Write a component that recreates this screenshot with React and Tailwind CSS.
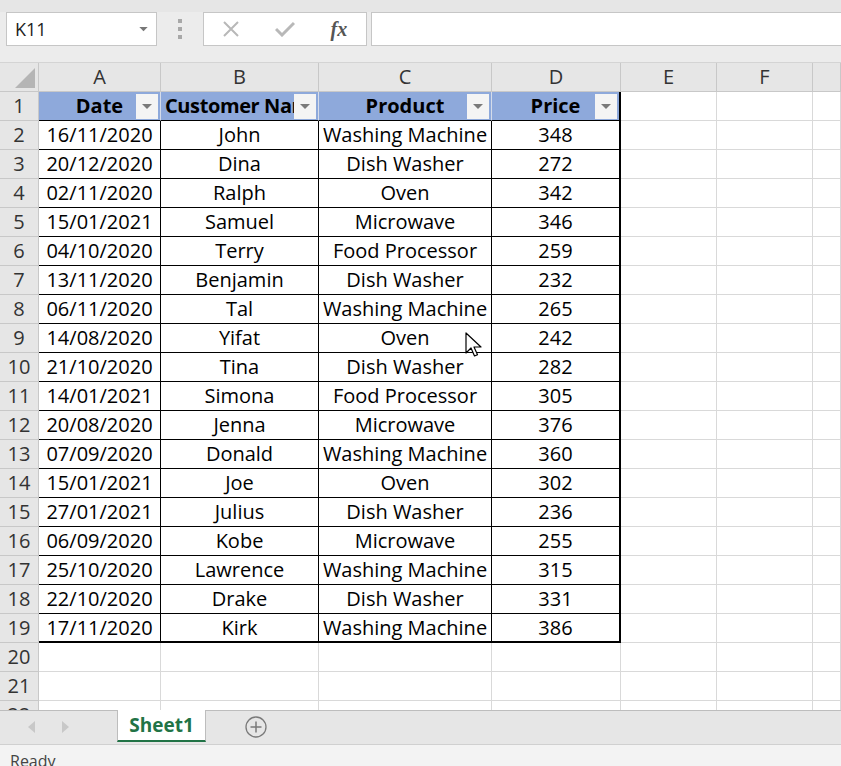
import React from "react";

const rows = [
  ["16/11/2020", "John", "Washing Machine", "348"],
  ["20/12/2020", "Dina", "Dish Washer", "272"],
  ["02/11/2020", "Ralph", "Oven", "342"],
  ["15/01/2021", "Samuel", "Microwave", "346"],
  ["04/10/2020", "Terry", "Food Processor", "259"],
  ["13/11/2020", "Benjamin", "Dish Washer", "232"],
  ["06/11/2020", "Tal", "Washing Machine", "265"],
  ["14/08/2020", "Yifat", "Oven", "242"],
  ["21/10/2020", "Tina", "Dish Washer", "282"],
  ["14/01/2021", "Simona", "Food Processor", "305"],
  ["20/08/2020", "Jenna", "Microwave", "376"],
  ["07/09/2020", "Donald", "Washing Machine", "360"],
  ["15/01/2021", "Joe", "Oven", "302"],
  ["27/01/2021", "Julius", "Dish Washer", "236"],
  ["06/09/2020", "Kobe", "Microwave", "255"],
  ["25/10/2020", "Lawrence", "Washing Machine", "315"],
  ["22/10/2020", "Drake", "Dish Washer", "331"],
  ["17/11/2020", "Kirk", "Washing Machine", "386"],
];

const gridCols = "grid grid-cols-[39px_122px_158px_173px_129px_96px_96px_1fr]";

const FilterButton = () => (
  <div className="absolute right-[2px] top-[2px] w-[22px] h-[25px] bg-[#f4f4f4] flex items-center justify-center">
    <svg width="10" height="6" viewBox="0 0 10 6">
      <path d="M0 0 L10 0 L5 5 Z" fill="#7a7a7a" />
    </svg>
  </div>
);

const RowNum = ({ n }) => (
  <div className="h-[29px] flex items-center justify-center bg-[#e6e6e6] border-r border-b border-[#c8c8c8] text-[20px] text-[#333]">
    {n}
  </div>
);

const Empty = () => <div className="h-[29px] border-r border-b border-[#d9d9d9] bg-white" />;

export default function App() {
  return (
    <div
      className="w-[841px] h-[766px] flex flex-col overflow-hidden bg-[#f3f3f3] select-none"
      style={{ fontFamily: '"Open Sans", sans-serif' }}
    >
      {/* formula bar */}
      <div className="h-[63px] bg-[#ececec] border-b border-[#d4d4d4] relative">
        <div className="absolute left-0 right-0 top-0 h-[12px] bg-[#e6e6e6]" />
        <div className="relative flex items-start pt-[12px]">
          <div className="ml-[6px] w-[151px] h-[34px] bg-white border border-[#c6c6c6] flex items-center justify-between pl-[8px] pr-[8px]">
            <span className="text-[18px] text-[#222]">K11</span>
            <svg width="9" height="5" viewBox="0 0 10 6">
              <path d="M0 0 L10 0 L5 5 Z" fill="#777" />
            </svg>
          </div>
          <div className="w-[46px] h-[34px] flex flex-col items-center justify-center gap-[4px]">
            <span className="w-[4px] h-[4px] bg-[#a8a8a8]" />
            <span className="w-[4px] h-[4px] bg-[#a8a8a8]" />
            <span className="w-[4px] h-[4px] bg-[#a8a8a8]" />
          </div>
          <div className="w-[164px] h-[34px] bg-white border border-[#c6c6c6] flex items-center">
            <div className="w-[55px] flex justify-center">
              <svg width="18" height="18" viewBox="0 0 18 18">
                <path d="M2 2 L16 16 M16 2 L2 16" stroke="#b8b8b8" strokeWidth="2" />
              </svg>
            </div>
            <div className="w-[54px] flex justify-center">
              <svg width="20" height="16" viewBox="0 0 20 16">
                <path d="M1 8 L7 14 L19 2" stroke="#b8b8b8" strokeWidth="3" fill="none" />
              </svg>
            </div>
            <div
              className="w-[55px] flex justify-center text-[20px] italic font-bold text-[#555]"
              style={{ fontFamily: '"Liberation Serif", serif' }}
            >
              fx
            </div>
          </div>
          <div className="ml-[4px] flex-1 h-[34px] bg-white border border-[#c6c6c6] border-r-0" />
        </div>
      </div>

      {/* sheet grid */}
      <div className="relative h-[647px] overflow-hidden bg-white">
        {/* column headers */}
        <div className={`${gridCols} h-[29px] bg-[#e6e6e6]`}>
          <div className="h-[29px] border-r border-b border-[#c8c8c8] relative overflow-hidden">
            <svg className="absolute right-[3px] bottom-[3px]" width="20" height="20" viewBox="0 0 20 20">
              <path d="M20 0 L20 20 L0 20 Z" fill="#b5b5b5" />
            </svg>
          </div>
          {["A", "B", "C", "D", "E", "F", ""].map((c, i) => (
            <div
              key={i}
              className="h-[29px] border-r border-b border-[#c8c8c8] flex items-center justify-center text-[20px] text-[#333]"
            >
              {c}
            </div>
          ))}
        </div>

        {/* header row */}
        <div className={gridCols}>
          <RowNum n={1} />
          {["Date", "Customer Name", "Product", "Price"].map((h, i) => (
            <div
              key={h}
              className={`relative h-[29px] bg-[#8ea9db] border-b border-black font-bold text-[20px] text-black ${
                i === 3 ? "border-r-2 border-r-black" : "border-r border-r-[#d5dcea]"
              }`}
            >
              {i === 1 ? (
                <div className="absolute left-0 top-0 bottom-0 right-[24px] overflow-hidden flex items-center pl-[4px] whitespace-nowrap tracking-[-0.4px]">
                  {h}
                </div>
              ) : (
                <div className="h-full flex items-center justify-center whitespace-nowrap">{h}</div>
              )}
              <FilterButton />
            </div>
          ))}
          <Empty />
          <Empty />
          <Empty />
        </div>

        {rows.map((r, idx) => {
          const last = idx === rows.length - 1;
          return (
            <div key={idx} className={gridCols}>
              <RowNum n={idx + 2} />
              {r.map((v, i) => (
                <div
                  key={i}
                  className={`h-[29px] flex items-center justify-center text-[20px] text-black whitespace-nowrap overflow-hidden border-black ${
                    i === 3 ? "border-r-2" : "border-r"
                  } ${last ? "border-b-2" : "border-b"}`}
                >
                  {v}
                </div>
              ))}
              <Empty />
              <Empty />
              <Empty />
            </div>
          );
        })}

        {[20, 21, 22].map((n) => (
          <div key={n} className={gridCols}>
            <RowNum n={n} />
            <Empty />
            <Empty />
            <Empty />
            <Empty />
            <Empty />
            <Empty />
            <Empty />
          </div>
        ))}

        {/* mouse pointer */}
        <svg className="absolute left-[465px] top-[269px]" width="20" height="28" viewBox="0 0 20 28">
          <path
            d="M1 1 L1 21 L6 16 L9.5 24 L12.5 22.7 L9 15 L16 15 Z"
            fill="white"
            stroke="black"
            strokeWidth="1.2"
            strokeLinejoin="round"
          />
        </svg>
      </div>

      {/* sheet tabs */}
      <div className="h-[34px] bg-[#e6e6e6] border-t border-[#bdbdbd] flex items-start">
        <div className="w-[117px] h-[32px] flex items-center">
          <svg className="ml-[28px]" width="8" height="12" viewBox="0 0 8 12">
            <path d="M7 0 L7 12 L0 6 Z" fill="#c8c8c8" />
          </svg>
          <svg className="ml-[26px]" width="8" height="12" viewBox="0 0 8 12">
            <path d="M0 0 L0 12 L7 6 Z" fill="#c8c8c8" />
          </svg>
        </div>
        <div className="-mt-px w-[89px] h-[32px] bg-white border-l border-r border-[#bdbdbd] border-b-2 border-b-[#217346] flex items-center justify-center text-[19px] font-bold text-[#217346]">
          Sheet1
        </div>
        <div className="ml-[39px] h-[32px] flex items-center">
          <svg width="22" height="22" viewBox="0 0 22 22">
            <circle cx="11" cy="11" r="10" fill="none" stroke="#7a7a7a" strokeWidth="1.3" />
            <path d="M11 5.5 L11 16.5 M5.5 11 L16.5 11" stroke="#7a7a7a" strokeWidth="1.5" />
          </svg>
        </div>
      </div>

      {/* status bar */}
      <div className="h-[22px] bg-[#f3f3f3] border-t border-[#d0d0d0] relative overflow-hidden">
        <span className="absolute left-[10px] top-[4px] text-[16px] text-[#444]">Ready</span>
      </div>
    </div>
  );
}
